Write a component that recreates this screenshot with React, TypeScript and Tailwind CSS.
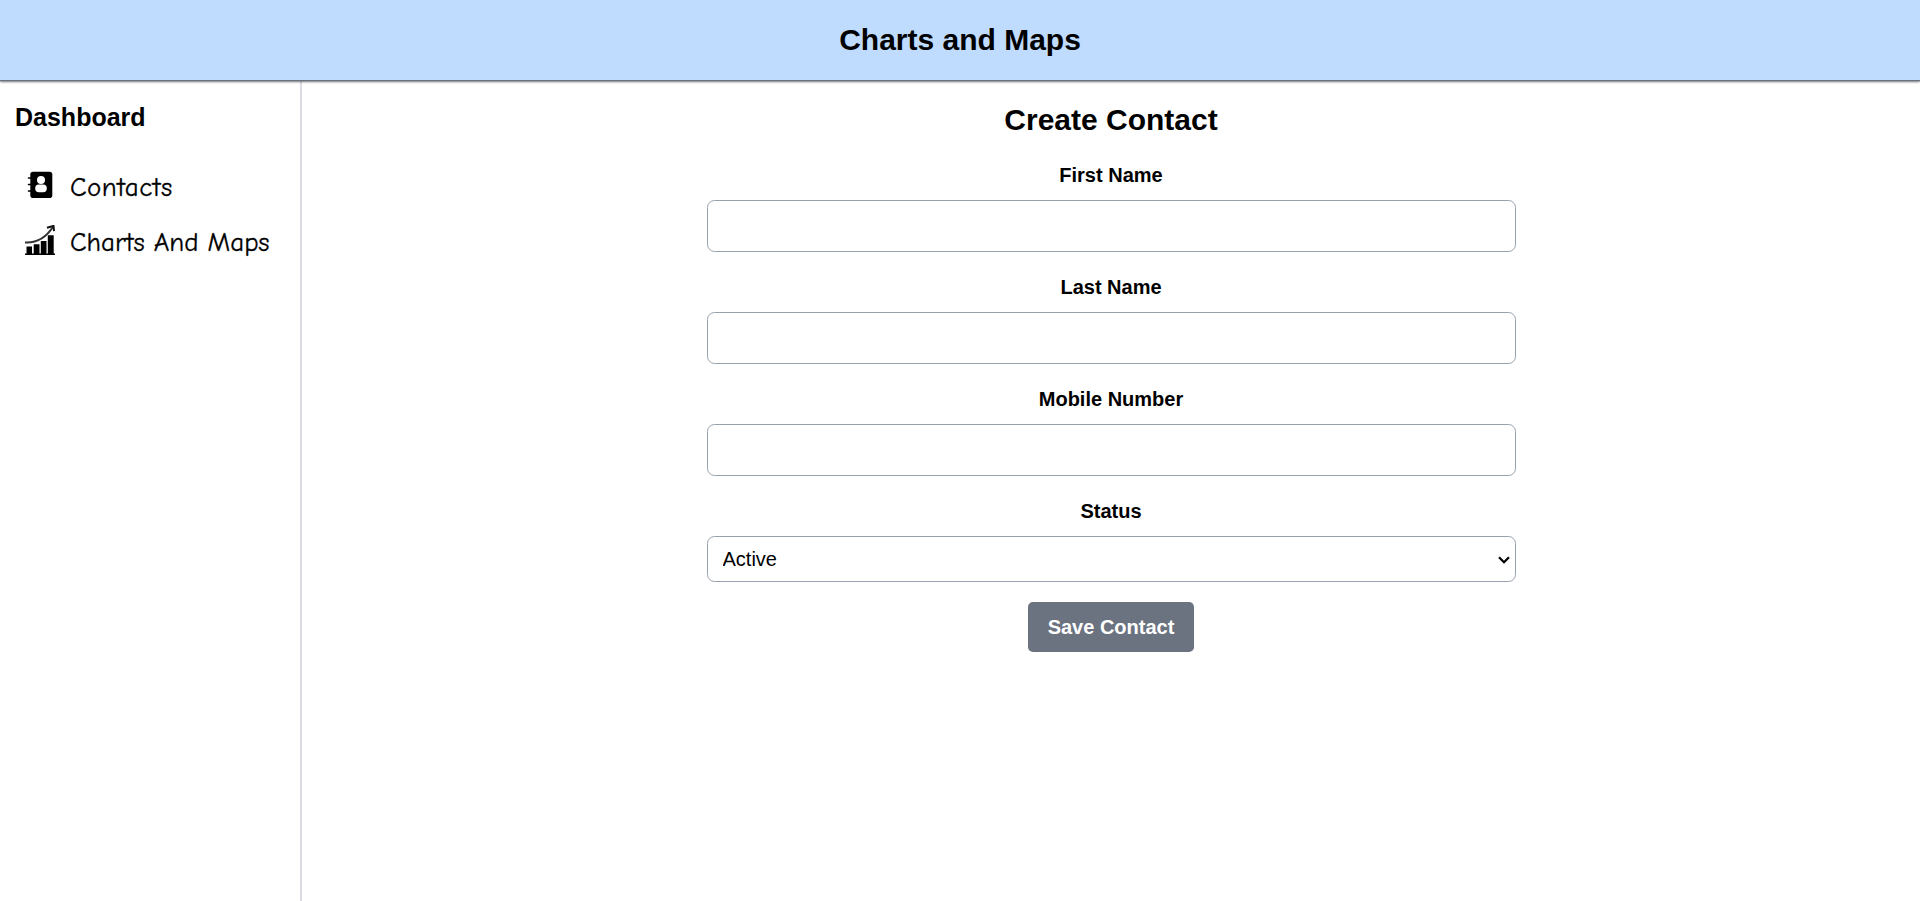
import React from 'react';

const ContactsIcon = () => (
  <svg width="30" height="30" viewBox="0 0 30 30" fill="#000" aria-hidden="true">
    <rect x="5.3" y="1.7" width="22" height="26.4" rx="2.8" />
    <path d="M3.6 8H7M3.6 14.5H7M3.6 21H7" stroke="#000" strokeWidth="1.7" strokeLinecap="round" />
    <circle cx="16" cy="10" r="4" fill="#fff" />
    <rect x="10.2" y="14.6" width="11.6" height="7.6" rx="3.6" fill="#fff" />
  </svg>
);

const ChartsIcon = () => (
  <svg width="30" height="30" viewBox="0 0 30 30" fill="#000" aria-hidden="true">
    <path d="M0 28.5h30V30H0zM1.500 21.500H7V29H1.500zM8.700 19.200h5.800V29H8.700zM15.800 16h5.700v13h-5.700zM22.800 10.200h5.900V29h-5.900z" />
    <path d="M0 17.400C11 18 21 13 28.300 1.200" fill="none" stroke="#333" strokeWidth="2" />
    <path d="M22 2.700 28.500.9 29 6.200" fill="none" stroke="#111" strokeWidth="2" />
  </svg>
);

const links = [
  { label: 'Contacts', Icon: ContactsIcon, className: 'tracking-[0.5px]' },
  { label: 'Charts And Maps', Icon: ChartsIcon, className: 'tracking-normal' },
];

const fields = ['First Name', 'Last Name', 'Mobile Number'];

export default function App() {
  return (
    <div className="flex h-screen flex-col bg-white font-['Liberation_Sans',Arial,sans-serif] text-xl leading-[30px] text-black">
      <header className="relative flex h-[81px] shrink-0 items-center justify-center border-b border-gray-500 bg-[#bfdbfe] shadow-[0_1px_2px_rgba(0,0,0,0.55)]">
        <h1 className="text-[30px] leading-10 font-bold">Charts and Maps</h1>
      </header>
      <div className="flex min-h-0 flex-1">
        <aside className="w-[302px] shrink-0 border-r-2 border-[#dcdde4] px-[15px] pt-[19px]">
          <h2 className="text-[25px] leading-[35px] font-bold">Dashboard</h2>
          <nav className="mt-[35px] flex flex-col gap-[25px] pl-2.5">
            {links.map(({ label, Icon, className }) => (
              <a key={label} href="#" className="flex h-[30px] items-center gap-[15px]">
                <Icon />
                <span className={`pt-1.5 font-['Comic_Sans_MS','Comic_Neue',Lato,cursive] text-[27px] whitespace-nowrap [-webkit-text-stroke:0.3px_#000] ${className}`}>
                  {label}
                </span>
              </a>
            ))}
          </nav>
        </aside>
        <main className="flex flex-1 flex-col items-center pt-[19px]">
          <h2 className="mb-5 text-[30px] leading-10 font-bold">Create Contact</h2>
          <form className="flex w-1/2 flex-col items-center">
            {fields.map((name) => (
              <label key={name} className="mb-5 flex w-full flex-col gap-2.5 text-center font-bold">
                {name}
                <input className="h-[52px] w-full rounded-[7.5px] border border-gray-400 px-[15px] font-normal" />
              </label>
            ))}
            <label className="mb-5 flex w-full flex-col gap-2.5 text-center font-bold">
              Status
              <span className="relative flex">
                <select className="h-[46px] w-full appearance-none rounded-[7.5px] border border-gray-400 bg-white px-[15px] text-left font-normal">
                  <option>Active</option>
                  <option>Inactive</option>
                </select>
                <svg className="pointer-events-none absolute top-[18px] right-[5px]" width="14" height="12" viewBox="0 0 14 12" fill="none" stroke="#000" strokeWidth="2.3" aria-hidden="true">
                  <path d="M2 3.200 7 8.200l5-5" />
                </svg>
              </span>
            </label>
            <button type="button" className="rounded-[5px] bg-[#6b7280] px-5 py-2.5 font-bold text-white">
              Save Contact
            </button>
          </form>
        </main>
      </div>
    </div>
  );
}
